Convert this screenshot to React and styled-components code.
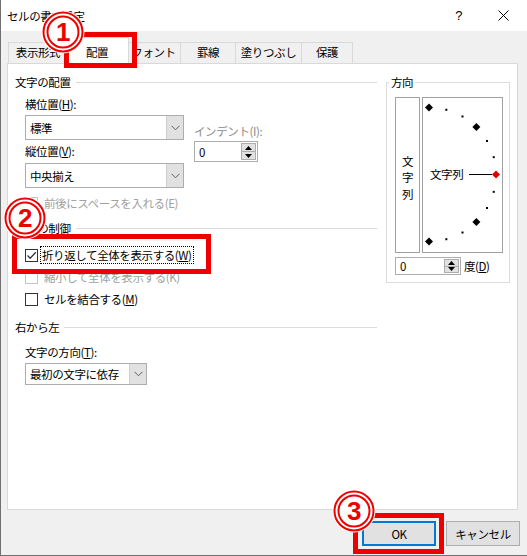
import React from "react";
import styled, { createGlobalStyle } from "styled-components";

const GlobalStyle = createGlobalStyle`
  html, body {
    margin: 0;
    padding: 0;
    overflow: hidden;
  }
  body {
    background: #f0f0f0;
    color: #000;
    font-family: "Noto Sans CJK JP", "Noto Sans", sans-serif;
    font-size: 11.5px;
    letter-spacing: -0.4px;
  }
`;

const RED = "#ee0000";

const Window = styled.div`
  position: relative;
  width: 527px;
  height: 556px;
  box-sizing: border-box;
  background: #f0f0f0;
  border-left: 1px solid #707070;
  border-bottom: 1px solid #707070;
  overflow: hidden;
  display: flex;
  flex-direction: column;
`;

const TitleBar = styled.div`
  height: 31px;
  flex: none;
  background: #fff;
  display: flex;
  align-items: center;
  justify-content: space-between;
  padding: 0 18px 0 6px;
`;

const Title = styled.span`
  font-size: 11.5px;
  line-height: 16px;
`;

const TitleButtons = styled.div`
  display: flex;
  align-items: center;
  gap: 36px;
`;

const HelpMark = styled.span`
  font-family: "Liberation Sans", sans-serif;
  font-size: 13px;
`;

const TabRow = styled.div`
  display: flex;
  align-items: flex-end;
  margin-top: 6px;
  padding-left: 7px;
`;

const Tab = styled.div`
  box-sizing: border-box;
  position: relative;
  z-index: ${(p) => (p.$active ? 2 : 1)};
  width: ${(p) => p.$w}px;
  height: ${(p) => (p.$active ? 27 : 21)}px;
  margin: ${(p) => (p.$active ? "0 -3px -1px -2px" : "0 -1px 0 0")};
  padding-top: ${(p) => (p.$active ? 5 : 0)}px;
  border: 1px solid #d9d9d9;
  border-bottom: none;
  background: ${(p) => (p.$active ? "#fff" : "#f0f0f0")};
  text-align: center;
  line-height: 19px;
`;

const Panel = styled.div`
  box-sizing: border-box;
  width: 511px;
  height: 447px;
  margin-left: 6px;
  border: 1px solid #d9d9d9;
  background: #fff;
  padding: 6px 7px 0 7px;
  display: flex;
  gap: 9px;
`;

const LeftColumn = styled.div`
  width: 362px;
  display: flex;
  flex-direction: column;
`;

const SectionHeader = styled.div`
  height: 24px;
  margin-top: ${(p) => p.$mt || 0}px;
  display: flex;
  align-items: center;
  gap: 5px;
  &::after {
    content: "";
    flex: 1;
    height: 1px;
    background: #dcdcdc;
  }
`;

const Indent = styled.div`
  padding-left: 10px;
  display: flex;
  flex-direction: column;
`;

const FieldLabel = styled.div`
  height: ${(p) => p.$h || 20}px;
  line-height: ${(p) => p.$h || 20}px;
  margin-top: ${(p) => p.$mt || 0}px;
  color: ${(p) => (p.$disabled ? "#8b8b8b" : "#000")};
  white-space: nowrap;
`;

const AlignGrid = styled.div`
  display: flex;
  gap: 10px;
`;

const AlignCol = styled.div`
  width: ${(p) => p.$w}px;
  padding-top: ${(p) => p.$pt || 0}px;
  display: flex;
  flex-direction: column;
`;

const SelectBox = styled.div`
  box-sizing: border-box;
  width: ${(p) => p.$w}px;
  height: ${(p) => p.$h}px;
  margin-top: ${(p) => p.$mt || 0}px;
  border: 1px solid #adadad;
  background: #fff;
  display: flex;
  flex: none;
`;

const SelectValue = styled.div`
  flex: 1;
  padding-left: 4px;
  display: flex;
  align-items: center;
  white-space: nowrap;
`;

const SelectButton = styled.div`
  width: 16px;
  background: #e1e1e1;
  border-left: 1px solid #cfcfcf;
  display: flex;
  align-items: center;
  justify-content: center;
`;

const SpinBox = styled.div`
  box-sizing: border-box;
  width: ${(p) => p.$w}px;
  height: ${(p) => p.$h}px;
  margin-top: ${(p) => p.$mt || 0}px;
  border: 1px solid #adadad;
  background: #fff;
  display: flex;
  flex: none;
`;

const SpinValue = styled.div`
  flex: 1;
  padding-left: 4px;
  display: flex;
  align-items: center;
`;

const SpinButtons = styled.div`
  width: 15px;
  display: flex;
  flex-direction: column;
  padding: 1px 1px 1px 0;
`;

const SpinButton = styled.div`
  flex: 1;
  background: #e1e1e1;
  border: 1px solid #adadad;
  margin-top: ${(p) => (p.$down ? -1 : 0)}px;
  display: flex;
  align-items: center;
  justify-content: center;
`;

const CheckRow = styled.div`
  height: 22px;
  margin-top: ${(p) => p.$mt || 0}px;
  display: flex;
  align-items: center;
  gap: 4px;
  color: ${(p) => (p.$disabled ? "#a0a0a0" : "#000")};
  white-space: nowrap;
`;

const CheckBox = styled.div`
  box-sizing: border-box;
  width: 13px;
  height: 13px;
  border: 1px solid ${(p) => (p.$disabled ? "#c4c4c4" : "#333")};
  background: #fff;
  flex: none;
  display: flex;
  align-items: center;
  justify-content: center;
`;

const CheckText = styled.span`
  padding: 0 1px;
  line-height: 16px;
  border: 1px dotted ${(p) => (p.$focus ? "#000" : "transparent")};
  margin-left: ${(p) => (p.$focus ? -2 : 0)}px;
`;

const GroupBox = styled.fieldset`
  box-sizing: border-box;
  width: 124px;
  height: 213px;
  margin: 0;
  padding: 3px 0 0 8px;
  border: 1px solid #dcdcdc;
  min-width: 0;
`;

const Legend = styled.legend`
  padding: 0 2px;
  margin-left: -6px;
  height: 24px;
  line-height: 24px;
`;

const OrientRow = styled.div`
  display: flex;
  gap: 2px;
`;

const VerticalBox = styled.div`
  box-sizing: border-box;
  width: 25px;
  height: 156px;
  border: 1px solid #a0a0a0;
  display: flex;
  flex-direction: column;
  align-items: center;
  justify-content: center;
  padding-top: 5px;
  line-height: 16.5px;
`;

const DialBox = styled.div`
  box-sizing: border-box;
  width: 81px;
  height: 156px;
  border: 1px solid #a0a0a0;
`;

const DegreeRow = styled.div`
  display: flex;
  align-items: center;
  gap: 3px;
  margin-top: 4px;
`;

const ButtonRow = styled.div`
  display: flex;
  justify-content: flex-end;
  gap: 10px;
  padding-right: 7px;
  margin-top: 11px;
`;

const DialogButton = styled.button`
  box-sizing: border-box;
  width: 74px;
  height: 25px;
  margin: 0;
  padding: 0;
  background: #e1e1e1;
  border: ${(p) => (p.$default ? "2px solid #0078d7" : "1px solid #adadad")};
  font-family: inherit;
  font-size: 11.5px;
  letter-spacing: inherit;
  color: #000;
`;

const RedFrame = styled.div`
  position: absolute;
  left: ${(p) => p.$x - 1}px;
  top: ${(p) => p.$y}px;
  width: ${(p) => p.$w}px;
  height: ${(p) => p.$h}px;
  box-sizing: border-box;
  border: 5px solid ${RED};
  z-index: 5;
`;

const BadgeWrap = styled.div`
  position: absolute;
  left: ${(p) => p.$cx - 23}px;
  top: ${(p) => p.$cy - 22}px;
  width: 44px;
  height: 44px;
  z-index: 6;
`;

const Chevron = () => (
  <svg width="9" height="6" viewBox="0 0 9 6">
    <polyline points="0.5,0.8 4.5,4.8 8.5,0.8" fill="none" stroke="#606060" strokeWidth="1" />
  </svg>
);

const Triangle = ({ down }) => (
  <svg width="7" height="4" viewBox="0 0 7 4">
    <polygon points={down ? "0,0 7,0 3.5,4" : "0,4 7,4 3.5,0"} fill="#000" />
  </svg>
);

const Check = () => (
  <svg width="11" height="11" viewBox="0 0 11 11">
    <polyline points="1.5,5.5 4.2,8.2 9.8,2.2" fill="none" stroke="#333" strokeWidth="1.3" />
  </svg>
);

const Select = ({ value, w, h, mt }) => (
  <SelectBox $w={w} $h={h} $mt={mt}>
    <SelectValue>{value}</SelectValue>
    <SelectButton>
      <Chevron />
    </SelectButton>
  </SelectBox>
);

const Spin = ({ value, w, h, mt }) => (
  <SpinBox $w={w} $h={h} $mt={mt}>
    <SpinValue>{value}</SpinValue>
    <SpinButtons>
      <SpinButton>
        <Triangle />
      </SpinButton>
      <SpinButton $down>
        <Triangle down />
      </SpinButton>
    </SpinButtons>
  </SpinBox>
);

// 半円の目盛り: 15度ごと, 45度ごとに大きいひし形
const Dial = () => {
  const cx = 6;
  const cy = 76.5;
  const r = 67;
  const marks = [];
  for (let a = 90; a >= -90; a -= 15) {
    if (a === 0) continue;
    const rad = (a * Math.PI) / 180;
    const x = cx + r * Math.cos(rad);
    const y = cy - r * Math.sin(rad);
    if (a % 45 === 0) {
      marks.push(
        <polygon key={a} points={`${x},${y - 4} ${x + 4},${y} ${x},${y + 4} ${x - 4},${y}`} fill="#000" />
      );
    } else {
      marks.push(<rect key={a} x={x - 1} y={y - 1} width="2" height="2" fill="#000" />);
    }
  }
  return (
    <svg width="79" height="154" viewBox="0 0 79 154">
      {marks}
      <text x="7" y="81" fontSize="11.5" fontFamily='"Noto Sans CJK JP", sans-serif' fill="#000">
        文字列
      </text>
      <line x1="46" y1="76.5" x2="69" y2="76.5" stroke="#000" strokeWidth="1" />
      <polygon points="73,72.5 77,76.5 73,80.5 69,76.5" fill="#e00000" />
    </svg>
  );
};

const Badge = ({ cx, cy, n }) => (
  <BadgeWrap $cx={cx} $cy={cy}>
    <svg width="44" height="44" viewBox="0 0 44 44">
      <circle cx="22" cy="22" r="21.5" fill="#fff" />
      <circle cx="22" cy="22" r="19.5" fill="none" stroke={RED} strokeWidth="2" />
      <circle cx="22" cy="22" r="15.5" fill="none" stroke={RED} strokeWidth="2" />
      <text
        x="22"
        y="31"
        textAnchor="middle"
        fontFamily='"Liberation Sans", sans-serif'
        fontWeight="bold"
        fontSize="26"
        fill={RED}
        stroke="#fff"
        strokeWidth="2"
        paintOrder="stroke"
      >
        {n}
      </text>
    </svg>
  </BadgeWrap>
);

const tabs = [
  { label: "表示形式", w: 60 },
  { label: "配置", w: 64, active: true },
  { label: "フォント", w: 55 },
  { label: "罫線", w: 56 },
  { label: "塗りつぶし", w: 67 },
  { label: "保護", w: 52 },
];

export default function App() {
  return (
    <>
      <GlobalStyle />
      <Window>
        <TitleBar>
          <Title>セルの書式設定</Title>
          <TitleButtons>
            <HelpMark>?</HelpMark>
            <svg width="11" height="11" viewBox="0 0 11 11">
              <line x1="0.5" y1="0.5" x2="10.5" y2="10.5" stroke="#000" strokeWidth="1" />
              <line x1="10.5" y1="0.5" x2="0.5" y2="10.5" stroke="#000" strokeWidth="1" />
            </svg>
          </TitleButtons>
        </TitleBar>

        <TabRow>
          {tabs.map((t) => (
            <Tab key={t.label} $w={t.w} $active={t.active}>
              {t.label}
            </Tab>
          ))}
        </TabRow>

        <Panel>
          <LeftColumn>
            <SectionHeader>文字の配置</SectionHeader>
            <Indent>
              <FieldLabel>
                横位置(<u>H</u>):
              </FieldLabel>
              <AlignGrid>
                <AlignCol $w={159}>
                  <Select value="標準" w={159} h={25} mt={1} />
                  <FieldLabel $h={23}>
                    縦位置(<u>V</u>):
                  </FieldLabel>
                  <Select value="中央揃え" w={159} h={25} />
                </AlignCol>
                <AlignCol $w={64} $pt={8}>
                  <FieldLabel $h={18} $disabled>
                    インデント(I):
                  </FieldLabel>
                  <Spin value="0" w={64} h={21} mt={1} />
                </AlignCol>
              </AlignGrid>
              <CheckRow $mt={4} $disabled>
                <CheckBox $disabled />
                <CheckText>前後にスペースを入れる(E)</CheckText>
              </CheckRow>
            </Indent>

            <SectionHeader $mt={2}>文字の制御</SectionHeader>
            <Indent>
              <CheckRow $mt={4}>
                <CheckBox>
                  <Check />
                </CheckBox>
                <CheckText $focus>
                  折り返して全体を表示する(<u>W</u>)
                </CheckText>
              </CheckRow>
              <CheckRow $disabled>
                <CheckBox $disabled />
                <CheckText>縮小して全体を表示する(K)</CheckText>
              </CheckRow>
              <CheckRow>
                <CheckBox />
                <CheckText>
                  セルを結合する(<u>M</u>)
                </CheckText>
              </CheckRow>
            </Indent>

            <SectionHeader $mt={5}>右から左</SectionHeader>
            <Indent>
              <FieldLabel $h={22} $mt={2}>
                文字の方向(<u>T</u>):
              </FieldLabel>
              <Select value="最初の文字に依存" w={122} h={22} />
            </Indent>
          </LeftColumn>

          <GroupBox>
            <Legend>方向</Legend>
            <OrientRow>
              <VerticalBox>
                <span>文</span>
                <span>字</span>
                <span>列</span>
              </VerticalBox>
              <DialBox>
                <Dial />
              </DialBox>
            </OrientRow>
            <DegreeRow>
              <Spin value="0" w={66} h={18} />
              <span>
                度(<u>D</u>)
              </span>
            </DegreeRow>
          </GroupBox>
        </Panel>

        <ButtonRow>
          <DialogButton $default>OK</DialogButton>
          <DialogButton>キャンセル</DialogButton>
        </ButtonRow>

        <RedFrame $x={64} $y={32} $w={73} $h={36} />
        <RedFrame $x={12} $y={234} $w={199} $h={40} />
        <RedFrame $x={353} $y={513} $w={91} $h={41} />
        <Badge cx={63} cy={32} n="1" />
        <Badge cx={25} cy={218} n="2" />
        <Badge cx={354} cy={511} n="3" />
      </Window>
    </>
  );
}
